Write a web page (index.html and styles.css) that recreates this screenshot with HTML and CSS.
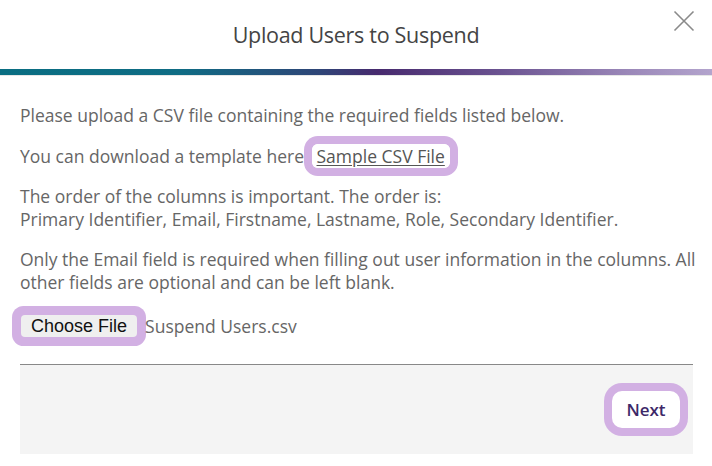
FILE: index.html
```html
<!DOCTYPE html>
<html>
<head>
<meta charset="utf-8">
<link rel="stylesheet" href="styles.css">
</head>
<body>
<div class="modal">
  <header class="modal-header">
    <h1 class="modal-title">Upload Users to Suspend</h1>
    <button class="close-btn" aria-label="Close">
      <svg width="22" height="22" viewBox="0 0 22 22"><path d="M1.5 1.5 L20.5 20.5 M20.5 1.5 L1.5 20.5" stroke="#8a8a8a" stroke-width="1.6" fill="none"/></svg>
    </button>
  </header>
  <div class="gradient-bar"></div>
  <div class="modal-body">
    <p>Please upload a CSV file containing the required fields listed below.</p>
    <p>You can download a template here <a class="sample-link" href="#">Sample CSV File</a></p>
    <p>The order of the columns is important. The order is:<br>Primary Identifier, Email, Firstname, Lastname, Role, Secondary Identifier.</p>
    <p>Only the Email field is required when filling out user information in the columns. All other fields are optional and can be left blank.</p>
    <div class="file-row">
      <span class="choose-btn">Choose File</span><span class="file-name">Suspend Users.csv</span>
    </div>
  </div>
  <footer class="modal-footer">
    <button class="next-btn">Next</button>
  </footer>
</div>
</body>
</html>
```
FILE: styles.css
```css
* { box-sizing: border-box; }
html, body { margin: 0; padding: 0; background: #fff; }
body { font-family: "Open Sans", "Liberation Sans", sans-serif; color: #666; }
.modal { width: 712px; height: 466px; background: #fff; }
.modal-header { position: relative; height: 69px; display: flex; align-items: center; justify-content: center; }
.modal-title { margin: 0; font-size: 21.5px; font-weight: 500; color: #444; letter-spacing: -0.3px; }
.close-btn { position: absolute; right: 17px; top: 10px; background: none; border: 0; padding: 0; width: 22px; height: 22px; }
.close-btn svg { display: block; }
.gradient-bar { height: 6px; background: linear-gradient(90deg, #0a6e82 0%, #0f6c84 25%, #2f4577 45%, #472a6e 53%, #6a5290 70%, #9a87b8 88%, #b3a4cd 100%); }
.modal-body { border-top: 1px solid #e6e6e6; padding: 28px 6px 0 20px; font-size: 17.5px; line-height: 22.5px; letter-spacing: 0; }
.modal-body p { margin: 0 0 18px; }
.sample-link { color: #555; text-decoration: underline; text-underline-offset: 2px; background: #fff; padding: 0 5px; margin-left: 3px; border-radius: 6px; box-shadow: 0 0 0 8px #d2b0e3; }
.file-row { display: flex; align-items: center; margin-top: 22px; height: 22px; }
.choose-btn { font-family: "Liberation Sans", Arial, sans-serif; font-size: 18px; letter-spacing: 0; color: #111; background: #efefef; border-radius: 4px; height: 22px; line-height: 22px; padding: 0 10px; margin-left: 1px; box-shadow: 0 0 0 9px #d2b0e3; }
.file-name { margin-left: 8px; color: #666; }
.modal-footer { margin: 27px 19px 0 20px; border-top: 1px solid #888; background: #f4f4f4; height: 90px; display: flex; justify-content: flex-end; align-items: flex-start; padding: 26px 13px 0 0; }
.next-btn { font-family: "Open Sans", sans-serif; font-size: 17px; font-weight: 600; color: #3d2868; background: #fff; border: 0; width: 68px; height: 37px; border-radius: 10px; box-shadow: 0 0 0 8px #d2b0e3; padding: 0; }
```
